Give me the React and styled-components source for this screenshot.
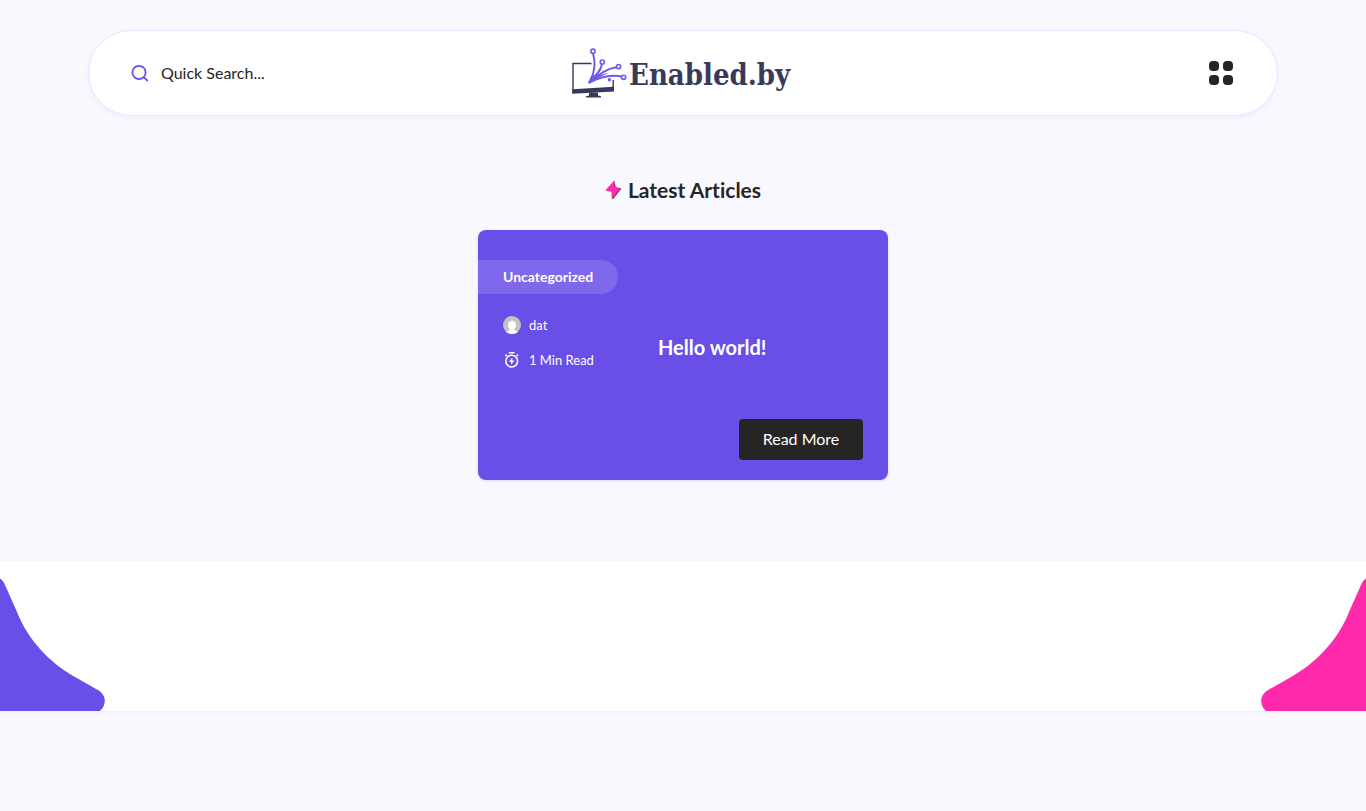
import React from "react";
import styled, { createGlobalStyle } from "styled-components";

const GlobalStyle = createGlobalStyle`
  *, *::before, *::after { box-sizing: border-box; }
  body {
    margin: 0;
    background: #f9f8ff;
    color: #272424;
    font-family: Lato, "Open Sans", sans-serif;
    font-size: 16px;
    line-height: 24px;
    font-variant-ligatures: none;
  }
  button, input { font: inherit; color: inherit; }
  h1, h2, h3, p { margin: 0; }
`;

const Page = styled.div`
  min-height: 100vh;
`;

const Header = styled.header`
  display: grid;
  grid-template-columns: 1fr auto 1fr;
  align-items: center;
  margin: 30px 88px 0;
  padding: 17px 42px;
  background: #fff;
  border: 1px solid #e8e4ff;
  border-radius: 44px;
  box-shadow: 0 2px 5px rgba(105, 79, 232, 0.06);
`;

const SearchForm = styled.label`
  display: flex;
  align-items: center;
  gap: 12px;
`;

const SearchInput = styled.input`
  width: 180px;
  height: 24px;
  padding: 0;
  border: 0;
  outline: 0;
  background: transparent;
  &::placeholder { color: #272424; opacity: 1; }
`;

const LogoLink = styled.a`
  display: block;
  height: 50px;
`;

const MenuButton = styled.button`
  justify-self: end;
  display: grid;
  grid-template-columns: 10px 10px;
  gap: 4px;
  padding: 0 2px;
  border: 0;
  background: transparent;
  cursor: pointer;
`;

const Dot = styled.span`
  height: 10px;
  border-radius: 4px;
  background: #272424;
`;

const Articles = styled.main`
  display: flex;
  flex-direction: column;
  align-items: center;
  gap: 28px;
  padding: 62px 24px 81px;
`;

const SectionTitle = styled.h2`
  display: flex;
  align-items: center;
  gap: 6px;
  font-size: 21px;
  font-weight: 700;
`;

const Card = styled.article`
  display: flex;
  flex-direction: column;
  width: 100%;
  max-width: 410px;
  min-height: 250px;
  padding: 30px 25px 20px 0;
  background: #694fe8;
  color: #fff;
  border-radius: 8px;
  box-shadow: 0 1px 3px rgba(105, 79, 232, 0.2);
`;

const Category = styled.a`
  align-self: flex-start;
  padding: 5px 25px;
  border-radius: 0 17px 17px 0;
  background: #7f68ec;
  color: inherit;
  font-size: 14px;
  font-weight: 700;
  text-decoration: none;
`;

const CardBody = styled.div`
  display: grid;
  grid-template-columns: 180px 1fr;
  align-items: center;
  padding-top: 19px;
`;

const Meta = styled.ul`
  display: grid;
  gap: 11px;
  margin: 0;
  padding: 0 0 0 25px;
  list-style: none;
  font-size: 13px;
`;

const MetaItem = styled.li`
  display: flex;
  align-items: center;
  gap: 8px;
`;

const ArticleTitle = styled.h3`
  padding-top: 8px;
  font-size: 20px;
  font-weight: 700;
`;

const ReadMore = styled.button`
  align-self: flex-end;
  margin-top: auto;
  min-width: 124px;
  padding: 8px 22px 9px;
  border: 0;
  border-radius: 4px;
  background: #272424;
  color: #fff;
  cursor: pointer;
`;

const Band = styled.section`
  display: flex;
  justify-content: space-between;
  align-items: flex-end;
  height: 150px;
  background: #fff;
  box-shadow: 0 1px 3px rgba(39, 36, 36, 0.05);
`;

function SearchIcon() {
  return (
    <svg width="18" height="18" viewBox="0 0 18 18" fill="none" stroke="#694fe8" strokeWidth="1.8" aria-hidden="true">
      <circle cx="8" cy="8.4" r="6.6" />
      <path d="M12.8 13.2 16.6 17" />
    </svg>
  );
}

function Logo() {
  return (
    <svg width="224" height="50" viewBox="0 0 224 50" role="img" aria-label="Enabled.by">
      <path d="M20.5 15.5H2V44.3L42.2 42.4V32" fill="none" stroke="#383a59" strokeWidth="1.4" />
      <path d="M1.3 41.2 42.9 38.8V43.4L1.3 45.8Z" fill="#383a59" />
      <path d="M18 44.5h9v3.1l3 .6v1.2H15v-1.2l3-.6Z" fill="#383a59" />
      <g fill="none" stroke="#7058ea" strokeWidth="1.9">
        <path d="M22.1 5.7Q26 20 19.4 32" />
        <path d="M30.8 16.5Q29.5 24 18 34.5" />
        <path d="M45.2 19.3Q33 21 18 35" />
        <path d="M50.4 28.5Q35 25.5 18 35" />
        <circle cx="22" cy="3.2" r="2.1" strokeWidth="1.6" />
        <circle cx="31.3" cy="14.1" r="2.1" strokeWidth="1.6" />
        <circle cx="47.6" cy="18.6" r="2.1" strokeWidth="1.6" />
        <circle cx="52.6" cy="29.3" r="2.1" strokeWidth="1.6" />
      </g>
      <path d="M16.7 35.4 22.8 23 22.3 28 31 20.5 25.5 28 38 24.5 27 30Z" fill="#7058ea" />
      <circle cx="38.4" cy="31.7" r="1.7" fill="#7058ea" />
      <text
        x="58"
        y="37"
        fill="#383a59"
        fontFamily="'DejaVu Serif Condensed', 'DejaVu Serif', serif"
        fontWeight="700"
        fontSize="29"
      >
        Enabled.by
      </text>
    </svg>
  );
}

function BoltIcon() {
  return (
    <svg width="17" height="20" viewBox="0 0 17 20" aria-hidden="true">
      <path d="M9.6 1.2 10.6 7.3 16.4 8.4 8.2 18.8 6.8 18.4 7.5 12.5Z" fill="#272424" />
      <path d="M9 .8Q9.8.5 9.8 1.6L9.6 7 14.6 8Q15.5 8.3 14.9 9.2L7.9 18.1Q7 19 6.7 17.8L6.5 11.7 1.2 10.8Q.4 10.5.9 9.7Z" fill="#ff29ab" />
    </svg>
  );
}

function Avatar() {
  return (
    <svg width="18" height="18" viewBox="0 0 18 18" aria-hidden="true">
      <circle cx="9" cy="9" r="9" fill="#c3c3c3" />
      <path d="M9 4.8c-2.4 0-4 1.9-4 4.3 0 1.6.6 3.2 1.7 4.1v1L3 15.7A9 9 0 0 0 15 15.7l-3.7-1.5v-1c1.1-.9 1.7-2.5 1.7-4.1 0-2.4-1.6-4.3-4-4.3Z" fill="#fff" />
    </svg>
  );
}

function TimerIcon() {
  return (
    <svg width="18" height="18" viewBox="0 0 18 18" aria-hidden="true">
      <g fill="none" stroke="#fff" strokeWidth="1.6">
        <circle cx="8.7" cy="10.1" r="5.9" />
        <path d="M5.8 1.8h5.8M2.3 4.9 3.8 3.6M15.1 4.9 13.6 3.6" />
      </g>
      <path d="M9.3 6.4v3h2.2l-3.4 4.4v-3H5.9Z" fill="#fff" />
    </svg>
  );
}

function CornerShape({ color, flipped }) {
  return (
    <svg width="106" height="135" viewBox="0 0 106 135" aria-hidden="true">
      <path
        transform={flipped ? "matrix(-1 0 0 1 106 0)" : undefined}
        d="M0 2.8Q3 4 5 9L17 36C28 64 50 87 75 101L97 113.5C106 118 107.500 128 100 135H0Z"
        fill={color}
      />
    </svg>
  );
}

export default function App() {
  return (
    <Page>
      <GlobalStyle />
      <Header>
        <SearchForm>
          <SearchIcon />
          <SearchInput type="text" placeholder="Quick Search..." aria-label="Quick Search" />
        </SearchForm>
        <LogoLink href="#">
          <Logo />
        </LogoLink>
        <MenuButton type="button" aria-label="Menu">
          <Dot /><Dot /><Dot /><Dot />
        </MenuButton>
      </Header>
      <Articles>
        <SectionTitle>
          <BoltIcon />
          Latest Articles
        </SectionTitle>
        <Card>
          <Category href="#">Uncategorized</Category>
          <CardBody>
            <Meta>
              <MetaItem><Avatar />dat</MetaItem>
              <MetaItem><TimerIcon />1 Min Read</MetaItem>
            </Meta>
            <ArticleTitle>Hello world!</ArticleTitle>
          </CardBody>
          <ReadMore type="button">Read More</ReadMore>
        </Card>
      </Articles>
      <Band>
        <CornerShape color="#694fe8" />
        <CornerShape color="#ff29ab" flipped />
      </Band>
    </Page>
  );
}
